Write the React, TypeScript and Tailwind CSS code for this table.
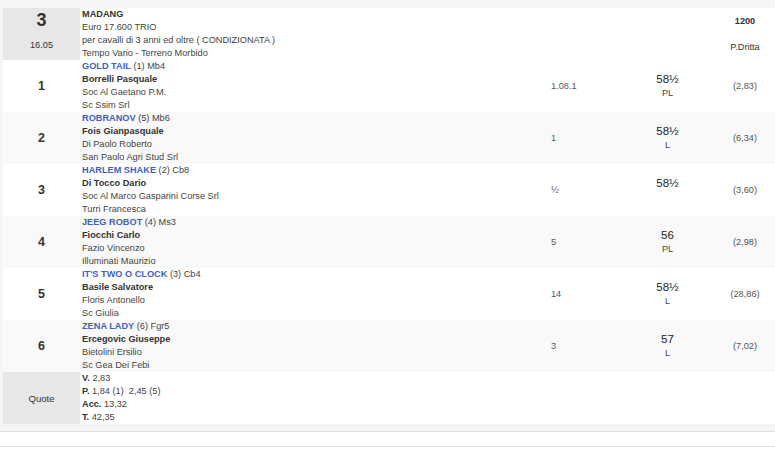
const font = { fontFamily: '"Liberation Sans", Arial, sans-serif' };

const rows = [
  { n: "1", horse: "GOLD TAIL", extra: "(1) Mb4", driver: "Borrelli Pasquale", trainer: "Soc Al Gaetano P.M.", owner: "Sc Ssim Srl", dist: "1.08.1", weight: "58½", type: "PL", odds: "(2,83)" },
  { n: "2", horse: "ROBRANOV", extra: "(5) Mb6", driver: "Fois Gianpasquale", trainer: "Di Paolo Roberto", owner: "San Paolo Agri Stud Srl", dist: "1", weight: "58½", type: "L", odds: "(6,34)" },
  { n: "3", horse: "HARLEM SHAKE", extra: "(2) Cb8", driver: "Di Tocco Dario", trainer: "Soc Al Marco Gasparini Corse Srl", owner: "Turri Francesca", dist: "½", weight: "58½", type: "", odds: "(3,60)" },
  { n: "4", horse: "JEEG ROBOT", extra: "(4) Ms3", driver: "Fiocchi Carlo", trainer: "Fazio Vincenzo", owner: "Illuminati Maurizio", dist: "5", weight: "56", type: "PL", odds: "(2,98)" },
  { n: "5", horse: "IT'S TWO O CLOCK", extra: "(3) Cb4", driver: "Basile Salvatore", trainer: "Floris Antonello", owner: "Sc Giulia", dist: "14", weight: "58½", type: "L", odds: "(28,86)" },
  { n: "6", horse: "ZENA LADY", extra: "(6) Fgr5", driver: "Ercegovic Giuseppe", trainer: "Bietolini Ersilio", owner: "Sc Gea Dei Febi", dist: "3", weight: "57", type: "L", odds: "(7,02)" },
];

export default function App() {
  return (
    <div className="w-[775px] h-[449px] overflow-hidden bg-white" style={font}>
      <div className="bg-[#f5f5f5] pt-[8px] pb-[7px] pl-[3px]">
        {/* Race header */}
        <div className="grid grid-cols-[77px_468px_72px_95px_60px] h-[52px] bg-white text-[9.2px] leading-[13px] text-[#444]">
          <div className="bg-[#e7e7e7] flex flex-col items-center pt-[1px]">
            <div className="text-[18px] leading-[22px] font-bold text-[#333]">3</div>
            <div className="mt-[8px] text-[#333]">16.05</div>
          </div>
          <div className="pl-[2px]">
            <div className="font-bold text-[#333]">MADANG</div>
            <div>Euro 17.600 TRIO</div>
            <div>per cavalli di 3 anni ed oltre ( CONDIZIONATA )</div>
            <div>Tempo Vario - Terreno Morbido</div>
          </div>
          <div />
          <div />
          <div className="flex flex-col items-center justify-center text-[#333]">
            <div className="font-bold">1200</div>
            <div>&nbsp;</div>
            <div>P.Dritta</div>
          </div>
        </div>

        {/* Runners */}
        {rows.map((r, i) => (
          <div
            key={r.n}
            className={`grid grid-cols-[77px_468px_72px_95px_60px] h-[52px] text-[9.2px] leading-[13px] text-[#444] ${
              i % 2 === 1 ? "bg-[#f9f9f9]" : "bg-white"
            }`}
          >
            <div className="flex items-center justify-center text-[12.5px] font-bold text-[#333]">{r.n}</div>
            <div className="pl-[2px]">
              <div>
                <span className="font-bold text-[#3f5fc6]">{r.horse}</span> {r.extra}
              </div>
              <div className="font-bold text-[#333]">{r.driver}</div>
              <div>{r.trainer}</div>
              <div>{r.owner}</div>
            </div>
            <div className="flex items-center pl-[3px] text-[#555]">{r.dist}</div>
            <div className="flex flex-col items-center justify-center">
              <div className="text-[11.5px] leading-[15px] text-[#222]">{r.weight}</div>
              <div className="text-[#444]">{r.type || "\u00a0"}</div>
            </div>
            <div className="flex items-center justify-center text-[#555]">{r.odds}</div>
          </div>
        ))}

        {/* Quote */}
        <div className="grid grid-cols-[77px_1fr] h-[52px] bg-white text-[9.2px] leading-[13px] text-[#444]">
          <div className="bg-[#e7e7e7] flex items-center justify-center text-[9.6px] text-[#333]">Quote</div>
          <div className="pl-[2px]">
            <div><b className="text-[#333]">V.</b> 2,83</div>
            <div><b className="text-[#333]">P.</b> 1,84 (1)&nbsp; 2,45 (5)</div>
            <div><b className="text-[#333]">Acc.</b> 13,32</div>
            <div><b className="text-[#333]">T.</b> 42,35</div>
          </div>
        </div>
      </div>

      <div className="h-[16px] border-y border-[#e2e2e2] bg-white" />
    </div>
  );
}
